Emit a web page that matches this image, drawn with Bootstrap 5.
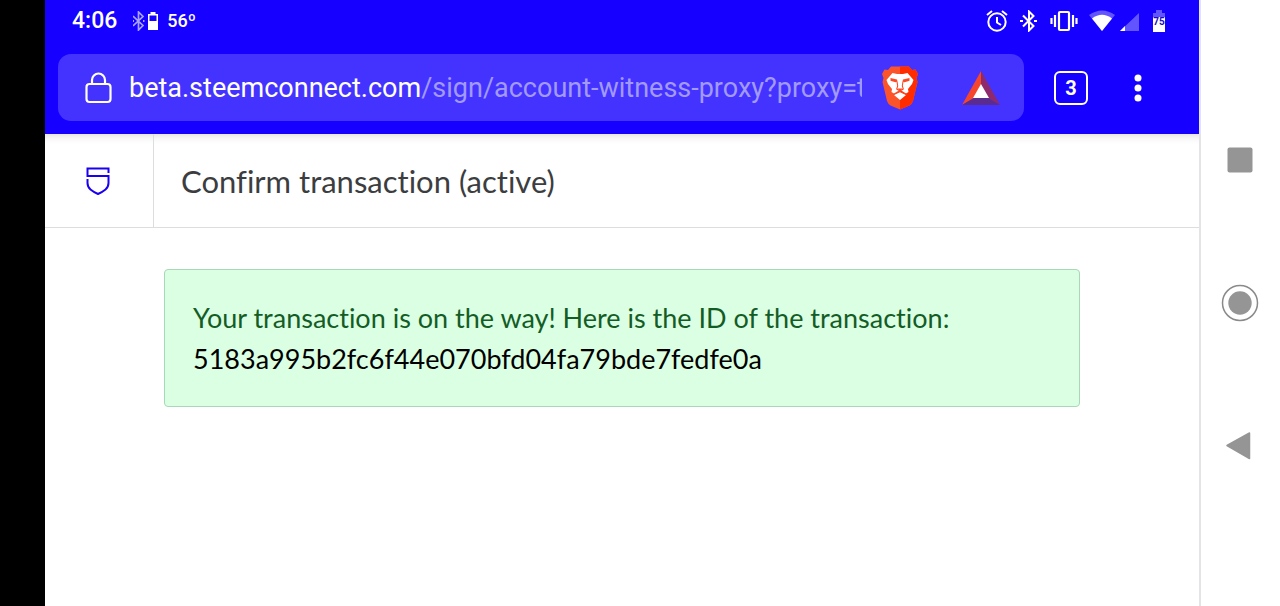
<!DOCTYPE html>
<html lang="en">
<head>
<meta charset="utf-8">
<meta name="viewport" content="width=device-width, initial-scale=1">
<title>Confirm transaction</title>
<link href="https://cdn.jsdelivr.net/npm/bootstrap@5.3.0/dist/css/bootstrap.min.css" rel="stylesheet">
<style>
  body { font-family: Lato, sans-serif; background: #fff; font-variant-ligatures: none; }
  svg { display: block; flex: none; }
  .bezel { width: 45px; background: #000; }
  .browser { background: #1600ff; color: #fff; font-family: Roboto, sans-serif; }
  .status { height: 42px; padding: 0 32px 0 27px; }
  .clock { font-size: 23px; font-weight: 500; line-height: 28px; }
  .temp { font-size: 18px; font-weight: 500; line-height: 28px; }
  .toolbar { padding: 12px 53px 13px 13px; }
  .omnibox { height: 67px; border-radius: 13px; background: #4433ff; padding: 0 24px 0 26px; }
  .url { width: 0; font-size: 27px; line-height: 36px; color: #a29aff; margin-left: 17px; margin-right: 20px; text-overflow: clip; }
  .url b { color: #fff; font-weight: 400; }
  .rewards { margin-left: 44px; }
  .tabs { width: 34px; height: 34px; border: 2px solid #fff; border-radius: 6px; font-size: 20px; font-weight: 700; line-height: 24px; margin-left: 30px; margin-right: 42px; }
  .titlebar { height: 94px; border-bottom: 1px solid #dcdddf; box-shadow: inset 0 10px 8px -8px #dddddf; }
  .brand { width: 109px; border-right: 1px solid #dcdddf; padding-right: 2px; }
  .title { font-size: 31px; line-height: 40px; color: #3c3d3f; padding-left: 27px; }
  .content { padding: 41px 119px; }
  .notice { background: #dbffe2; border: 1px solid #a9d8b8; border-radius: 4px; padding: 27px 28px; font-size: 27px; line-height: 41px; color: #145c26; }
  .txid { color: #000; }
  .sysnav { width: 81px; border-left: 2px solid #e4e4e6; gap: 105px; padding: 141px 2px 0 0; }
</style>
</head>
<body>
<div class="d-flex min-vh-100">
  <div class="bezel flex-shrink-0"></div>
  <div class="flex-grow-1 overflow-hidden">
    <header class="browser">
      <div class="status d-flex align-items-center justify-content-between">
        <div class="d-flex align-items-center">
          <span class="clock">4:06</span>
          <svg class="ms-3" width="26" height="20" viewBox="0 0 26 20">
            <path d="M0 5l10 9.500-4.500 4.500v-18l4.500 4.500L0 15" fill="none" stroke="#a9a2ff" stroke-width="1.700"/>
            <path d="M0 10h1M10 10h1.500" stroke="#a9a2ff" stroke-width="2"/>
            <path d="M15 3h2.500V1h5v2H25v16H15z" fill="#fff"/><path d="M16.500 4.500h7V10h-7z" fill="#1600ff"/>
          </svg>
          <span class="temp ms-2">56º</span>
        </div>
        <div class="d-flex align-items-center">
          <svg width="22" height="22" viewBox="0 0 22 22" fill="none" stroke="#fff" stroke-width="2">
            <circle cx="11" cy="12" r="8.700"/><path d="M11 7v5.500l4 2.500M1 5l5-4M16 1l5 4"/>
          </svg>
          <svg class="mx-2" width="26" height="22" viewBox="0 0 26 22" fill="none" stroke="#fff" stroke-width="2">
            <path d="M7 5.500l10.500 10.500-4.500 4.500V1.500l4.500 4.500L7 16.500M4 11h3M18 11h3"/>
          </svg>
          <svg width="28" height="22" viewBox="0 0 28 22" fill="none" stroke="#fff" stroke-width="2.200">
            <rect x="9" y="2" width="10" height="18" rx="1"/><path d="M5 5v12M1.500 8v6M23 5v12M26.500 8v6"/>
          </svg>
          <svg class="ms-2 me-1" width="30" height="22" viewBox="-3 0 30 22">
            <path d="M0 5Q13 -4 26 5L13 21z" fill="#6255ff"/><path d="M3 8.500Q13 1 23 8.500L13 21z" fill="#fff"/>
          </svg>
          <svg width="19" height="22" viewBox="0 0 19 22">
            <path d="M0 21L19 3v18z" fill="#6255ff"/><path d="M0 21l5-5v5z" fill="#fff"/>
          </svg>
          <svg class="ms-2" width="20" height="24" viewBox="-5 0 20 24">
            <path d="M4 1h6v3h3v6H1V4h3z" fill="#6255ff"/><path d="M1 8h12v15H1z" fill="#fff"/>
            <text x="7" y="16" text-anchor="middle" font-size="10" font-weight="700" fill="#1b0bbd">75</text>
          </svg>
        </div>
      </div>
      <div class="toolbar d-flex align-items-center">
        <div class="omnibox d-flex align-items-center flex-grow-1 overflow-hidden">
          <svg width="28" height="32" viewBox="0 0 28 32" fill="none" stroke="#fff" stroke-width="2.200">
            <rect x="2.500" y="12" width="24" height="18" rx="3"/><path d="M8 12V8a6.500 6.500 0 0 1 13 0v4"/>
          </svg>
          <button type="button" class="url btn p-0 border-0 rounded-0 flex-grow-1 overflow-hidden text-nowrap text-start"><b>beta.steemconnect.com</b>/sign/account-witness-proxy?proxy=t</button>
          <button type="button" class="btn p-0 border-0" aria-label="Brave Shields">
            <svg width="36" height="44" viewBox="0 0 36 44">
              <path d="M9 .5h18l3 3.500 3.500-.5L36 8l-1.500 4 1 4-4.500 19q-1 3-3.500 4.500L18 43.500l-9.500-4Q6 38 5 35L.5 16l1-4L0 8l2.500-4.500L6 4z" fill="#fb542b"/>
              <path d="M18 .5h9l3 3.500 3.500-.5L36 8l-1.500 4 1 4-4.500 19q-1 3-3.500 4.500L18 43.500z" fill="#ff2c00"/>
              <path d="M10.500 7l4.500 1h6l4.500-1 6 7-1.500 4-4 5 .5 3-2.500 1.500-4-2.500h-4l-4 2.500L9.500 26l.5-3-4-5-1.500-4z" fill="#fff"/>
              <path d="M12 29l6-3 6 3-6 5z" fill="#fff"/>
              <path d="M8.500 12l6.500 1.500.5 2-2 .7-5-1.500zM27.500 12L21 13.500l-.5 2 2 .7 5-1.500z" fill="#fb4a22"/>
              <path d="M15 15.500l.7 4.500-1 3 3.300 2 3.300-2-1-3 .7-4.500M11.500 28.500l6.500-3 6.500 3" fill="none" stroke="#fb4a22" stroke-width="1.100"/>
              <path d="M15.500 22.500h5L18 25.500z" fill="#fb4a22"/>
            </svg>
          </button>
          <button type="button" class="rewards btn p-0 border-0" aria-label="Brave Rewards">
            <svg width="38" height="36" viewBox="0 0 38 36">
              <path d="M19 1L0 35l12-7 7-13z" fill="#f5452c"/><path d="M19 1l19 34-12-7-7-13z" fill="#8e2a6b"/><path d="M0 35h38l-12-7H12z" fill="#5b2c8f"/><path d="M19 14l8 14H11z" fill="#fff"/>
            </svg>
          </button>
        </div>
        <button type="button" class="tabs btn p-0 text-white d-flex align-items-center justify-content-center flex-shrink-0">3</button>
        <button type="button" class="btn p-0 border-0" aria-label="Menu">
          <svg width="16" height="28" viewBox="0 0 16 28" fill="#fff"><circle cx="8" cy="4" r="3.500"/><circle cx="8" cy="14" r="3.500"/><circle cx="8" cy="24" r="3.500"/></svg>
        </button>
      </div>
    </header>
    <main>
      <div class="titlebar d-flex">
        <a href="#" class="brand d-flex align-items-center justify-content-center flex-shrink-0" aria-label="SteemConnect">
          <svg width="24" height="28" viewBox="0 0 24 28" fill="none" stroke="#1a00f0" stroke-width="2">
            <path d="M22.500 6V1.500H1.500V9h21v7q0 4-3 6.500-3 2.500-7.500 4.500-4.500-2-7.500-4.500-3-2.500-3-6.500v-4"/>
          </svg>
        </a>
        <h1 class="title m-0 fw-normal align-self-center">Confirm transaction (active)</h1>
      </div>
      <div class="content">
        <div class="notice" role="status">
          <div>Your transaction is on the way! Here is the ID of the transaction:</div>
          <div class="txid text-break">5183a995b2fc6f44e070bfd04fa79bde7fedfe0a</div>
        </div>
      </div>
    </main>
  </div>
  <nav class="sysnav d-flex flex-column align-items-center flex-shrink-0" aria-label="System">
    <button type="button" class="btn p-0 border-0" aria-label="Recent apps"><svg width="38" height="38" viewBox="0 0 38 38"><rect x="6.500" y="6.500" width="25" height="25" rx="2" fill="#959595"/></svg></button>
    <button type="button" class="btn p-0 border-0" aria-label="Home"><svg width="38" height="38" viewBox="0 0 38 38"><circle cx="19" cy="19" r="17.500" fill="none" stroke="#8a8a8a" stroke-width="1.500"/><circle cx="19" cy="19" r="11.700" fill="#959595"/></svg></button>
    <button type="button" class="btn p-0 border-0" aria-label="Back"><svg width="38" height="38" viewBox="0 0 38 38"><path d="M6 18.500L28.500 6v25.500z" fill="#959595" stroke="#959595" stroke-width="1.500" stroke-linejoin="round"/></svg></button>
  </nav>
</div>
<script src="https://cdn.jsdelivr.net/npm/bootstrap@5.3.0/dist/js/bootstrap.bundle.min.js"></script>
</body>
</html>
